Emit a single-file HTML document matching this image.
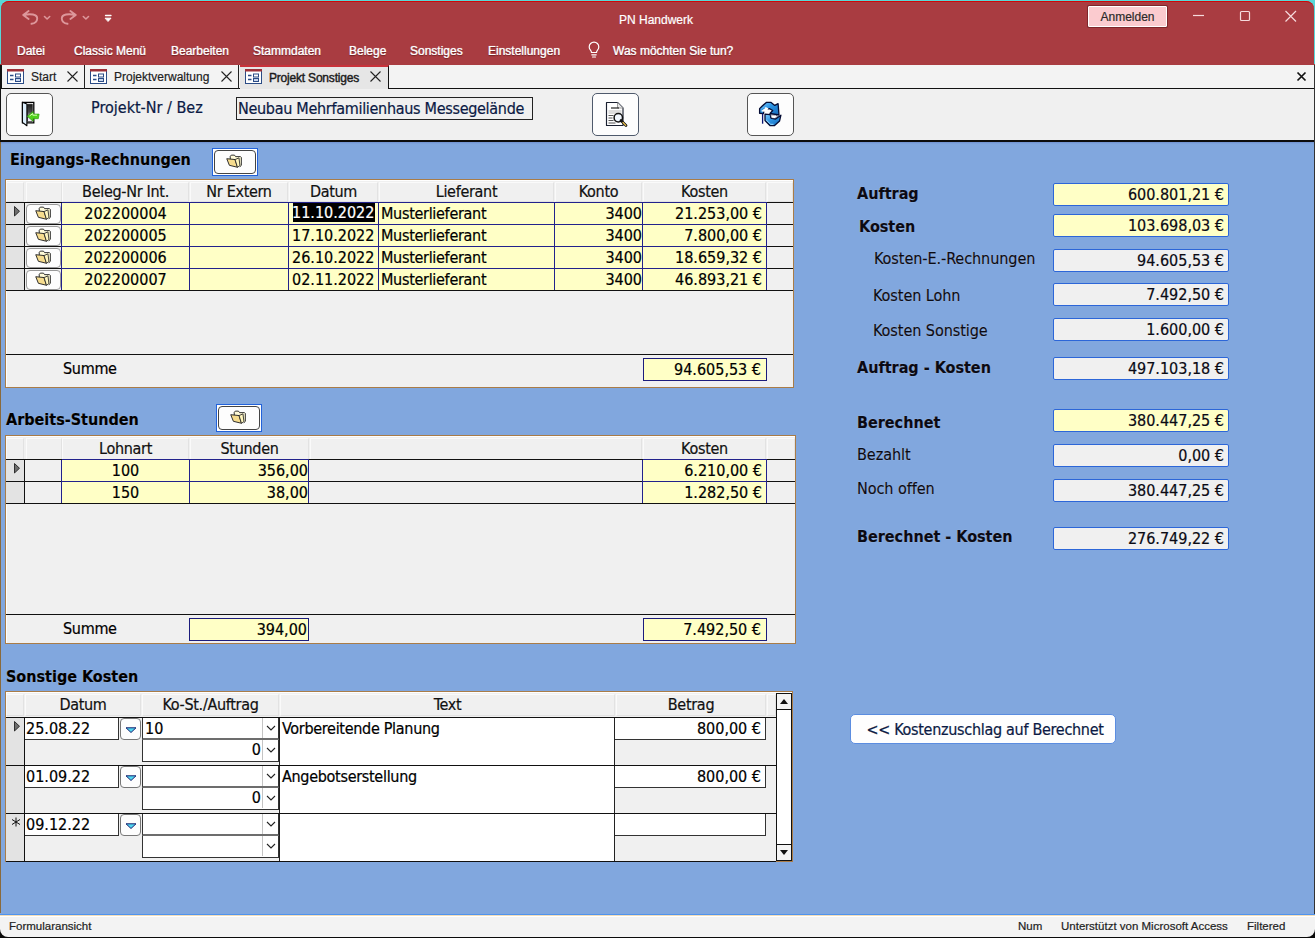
<!DOCTYPE html>
<html lang="de"><head><meta charset="utf-8"><title>PN Handwerk</title>
<style>
*{box-sizing:border-box;margin:0;padding:0}
html,body{width:1315px;height:938px;overflow:hidden}
body{position:relative;background:#81A7DE;font-family:'DejaVu Sans Condensed','Liberation Sans',sans-serif;font-size:16px;letter-spacing:-.3px;color:#000;line-height:1;-webkit-text-stroke:.2px currentColor}
.a{position:absolute;white-space:nowrap}
.ui{font-family:'Liberation Sans',sans-serif;letter-spacing:0}
.rib{left:0;top:0;width:1315px;height:65px;background:#A93C41}
.menu{top:44px;font-size:12px;color:#fff;height:14px;line-height:14px;text-shadow:0 0 1px rgba(255,255,255,.55),0 1px 1px rgba(70,0,0,.7)}
.tabrow{left:0;top:65px;width:1315px;height:24px;background:#F3F3F3;border-bottom:1px solid #111}
.tab{top:65px;height:24px;font-size:12px;line-height:25px;color:#222;border-right:1px solid #222}
.tab.act{background:#E6E6E6;border-right:1px solid #111;border-top:2px solid #C8323A;height:24px;line-height:20px;font-weight:normal;-webkit-text-stroke:.4px #1a1a1a;letter-spacing:-.2px;color:#1a1a1a}
.hdr{left:0;top:89px;width:1315px;height:51px;background:#F0F0F0}
.hline{left:0;top:140px;width:1315px;height:2px;background:#0c0c0c}
.btn{background:#FDFDFD;border:1px solid #555;border-radius:5px}
.fb{background:#fff;border:1px solid #2262DA}
.fb i{position:absolute;left:1px;top:1px;right:1px;bottom:1px;border:1px solid #444;border-radius:4px;background:#FDFDFD}
.h1{font-weight:bold;font-size:16px;letter-spacing:0;height:20px;line-height:20px;color:#000;text-shadow:0 0 1px rgba(255,255,255,.55)}
.sf{background:#F0F0F0;border:1px solid #A97C48;box-shadow:inset 1px 1px 0 #fff}
.hc{top:2px;height:20px;line-height:18px;text-align:center;border:1px solid #fafafa;border-right-color:#e2e2e2;border-bottom-color:#e2e2e2;color:#111}
.bl{background:#111}
.nl{background:#22228C}
.y{background:#FFFFC6}
.c{height:21px;line-height:19px}
.n{letter-spacing:0}
.r{text-align:right}
.ct{text-align:center}
.sel{background:#E3E3E3;border-right:1px solid #111}
.rb{background:#FDFDFD;border:1px solid #666;border-radius:4px}
.lab{height:20px;line-height:20px;letter-spacing:-.05px;color:#0a0a14;text-shadow:0 0 1px rgba(255,255,255,.6)}
.lab.b{font-weight:bold;font-size:16px;letter-spacing:0}
.fld{left:1053px;width:176px;height:23px;line-height:21px;letter-spacing:0;border:1px solid #2C66D8;border-radius:2px;text-align:right;padding-right:4px;background:#F0F0F0;color:#0a0a14}
.fld.y{background:#FFFFC6}
.sum{border:1px solid #1c1c7c;background:#FFFFC6;height:23px;line-height:21px;letter-spacing:0;text-align:right}
.wb{background:#fff;border:1px solid #333;border-top-color:#222;height:23px;line-height:21px}
.sb{left:0;top:914px;width:1315px;height:24px;background:#F3F3F3;border-top:1px solid #4F93EE;box-shadow:inset 0 1px 0 #F3DDB8,inset 0 2px 0 #fff}
.st{top:919px;font-size:11.5px;height:14px;line-height:14px;color:#222}
</style></head>
<body>
<div class="a rib" style=""></div>
<svg class="a" style="left:18px;top:8px" width="100" height="20" viewBox="0 0 100 20" fill="none" stroke="#DD979B" stroke-width="1.600" stroke-linecap="round" stroke-linejoin="round">
<path d="M10.600 3L5.200 7l5.400 4M6 7C12 5.500 19.500 6 19.200 10.800C19 14 16 15.500 13.500 15.800" stroke-width="1.900"/>
<path d="M26.500 8.500l2.600 2.500 2.600-2.500" stroke-width="1.600"/>
<path d="M52.400 3L57.800 7l-5.400 4M57 7C51 5.500 43.500 6 43.800 10.800C44 14 47 15.500 49.500 15.800" stroke-width="1.900"/>
<path d="M65.300 8.500l2.600 2.500 2.600-2.500" stroke-width="1.600"/>
<path d="M87.500 7.500h5.500" stroke="#fff" stroke-width="1.300"/><path d="M87.500 10.200h5.500l-2.750 3z" fill="#fff" stroke="#fff" stroke-width="1"/>
</svg>
<div class="a ui" style="left:556px;top:13px;width:200px;height:14px;line-height:14px;font-size:12px;color:#fff;text-align:center">PN Handwerk</div>
<div class="a ui" style="left:1088px;top:6px;width:79px;height:21px;background:#FBCBCF;border:1px solid #fff;box-shadow:0 0 0 1px rgba(90,20,24,.55);border-radius:1px;font-size:12px;line-height:20px;text-align:center;color:#2a2a2a">Anmelden</div>
<svg class="a" style="left:1185px;top:8px" width="120" height="18" viewBox="0 0 120 18" fill="none" stroke="#F6DADC" stroke-width="1.200">
<path d="M8 7.500h11"/><rect x="55.500" y="3.500" width="9" height="9" rx="1"/><path d="M100.500 3l10.500 10.500M111 3l-10.500 10.500"/></svg>
<div class="a menu ui" style="left:17px">Datei</div>
<div class="a menu ui" style="left:74px">Classic Menü</div>
<div class="a menu ui" style="left:171px">Bearbeiten</div>
<div class="a menu ui" style="left:253px">Stammdaten</div>
<div class="a menu ui" style="left:349px">Belege</div>
<div class="a menu ui" style="left:410px">Sonstiges</div>
<div class="a menu ui" style="left:488px">Einstellungen</div>
<div class="a menu ui" style="left:613px">Was möchten Sie tun?</div>
<svg class="a" style="left:586px;top:40px" width="16" height="19" viewBox="0 0 16 19" fill="none" stroke="#fff" stroke-width="1.200" stroke-linecap="round"><path d="M5.500 12.500c0-2-2.300-2.800-2.300-5.600a4.800 4.800 0 0 1 9.600 0c0 2.800-2.300 3.600-2.300 5.600z"/><path d="M5.800 14.800h4.400M6.500 17h3"/></svg>
<div class="a tabrow" style=""></div>
<div class="a tab ui" style="left:3px;width:82px"><svg class="a" style="left:4px;top:4px" width="17" height="15" viewBox="0 0 17 15"><rect x=".5" y=".5" width="16" height="14" fill="#fff" stroke="#2B4C86"/><rect x="0" y="0" width="17" height="2.500" fill="#9C3038"/><path d="M3 6.500h3.500M3 10.500h3.500" stroke="#2B4C86" stroke-width="1.400"/><rect x="8.500" y="5" width="5" height="3" fill="none" stroke="#2B4C86"/><rect x="8.500" y="9.500" width="5" height="3" fill="#C9D6EC" stroke="#2B4C86"/></svg><span class="a" style="left:28px">Start</span><svg class="a" style="left:64px;top:6px" width="11" height="11" viewBox="0 0 11 11" stroke="#222" stroke-width="1.100"><path d="M.5.500l10 10M10.500.500l-10 10"/></svg></div>
<div class="a tab ui" style="left:85px;width:154px"><svg class="a" style="left:5px;top:4px" width="17" height="15" viewBox="0 0 17 15"><rect x=".5" y=".5" width="16" height="14" fill="#fff" stroke="#2B4C86"/><rect x="0" y="0" width="17" height="2.500" fill="#9C3038"/><path d="M3 6.500h3.500M3 10.500h3.500" stroke="#2B4C86" stroke-width="1.400"/><rect x="8.500" y="5" width="5" height="3" fill="none" stroke="#2B4C86"/><rect x="8.500" y="9.500" width="5" height="3" fill="#C9D6EC" stroke="#2B4C86"/></svg><span class="a" style="left:29px">Projektverwaltung</span><svg class="a" style="left:136px;top:6px" width="11" height="11" viewBox="0 0 11 11" stroke="#222" stroke-width="1.100"><path d="M.5.500l10 10M10.500.500l-10 10"/></svg></div>
<div class="a tab ui act" style="left:240px;width:149px"><svg class="a" style="left:5px;top:2px" width="17" height="15" viewBox="0 0 17 15"><rect x=".5" y=".5" width="16" height="14" fill="#fff" stroke="#2B4C86"/><rect x="0" y="0" width="17" height="2.500" fill="#9C3038"/><path d="M3 6.500h3.500M3 10.500h3.500" stroke="#2B4C86" stroke-width="1.400"/><rect x="8.500" y="5" width="5" height="3" fill="none" stroke="#2B4C86"/><rect x="8.500" y="9.500" width="5" height="3" fill="#C9D6EC" stroke="#2B4C86"/></svg><span class="a" style="left:29px;top:1px">Projekt Sonstiges</span><svg class="a" style="left:130px;top:4px" width="11" height="11" viewBox="0 0 11 11" stroke="#222" stroke-width="1.100"><path d="M.5.500l10 10M10.500.500l-10 10"/></svg></div>
<svg class="a" style="left:1296px;top:71px" width="11" height="11" viewBox="0 0 11 11" stroke="#111" stroke-width="1.700"><path d="M1.500 1.500l8 8M9.500 1.500l-8 8"/></svg>
<div class="a hdr" style=""></div>
<div class="a hline" style=""></div>
<div class="a " style="left:0;top:142px;width:1315px;height:2px;background:linear-gradient(#6F90D0,#81A7DE)"></div>
<div class="a " style="left:0;top:65px;width:2px;height:24px;background:#111"></div>
<div class="a " style="left:0;top:89px;width:1px;height:52px;background:#111"></div>
<div class="a " style="left:0;top:142px;width:1px;height:771px;background:#8a6a3c"></div>
<div class="a " style="left:1314px;top:65px;width:1px;height:873px;background:#333"></div>
<div class="a btn" style="left:6px;top:93px;width:47px;height:43px"></div>
<div class="a btn" style="left:592px;top:93px;width:47px;height:43px;border-color:#4f5a6c"></div>
<div class="a btn" style="left:747px;top:93px;width:47px;height:43px"></div>
<svg class="a" style="left:20px;top:101px" width="22" height="26" viewBox="0 0 22 26">
<defs><linearGradient id="dg" x1="0" y1="0" x2="0" y2="1"><stop offset="0" stop-color="#1e1e1e"/><stop offset=".45" stop-color="#4a4a4a"/><stop offset=".8" stop-color="#e6d8f0"/><stop offset="1" stop-color="#fff"/></linearGradient></defs>
<path d="M2.500 1.300h11.300v20.600H2.500z" fill="#fff" stroke="#000" stroke-width="1.300"/><path d="M7.500 3.300h4.800v17.300H7.500z" fill="url(#dg)" stroke="#111" stroke-width=".7"/>
<path d="M2.400 1.300L6.900 3v21.800L2.400 21.400z" fill="#DCEEFB" stroke="#000" stroke-width="1.100" stroke-linejoin="round"/>
<path d="M7.200 15.300l6-4.800v2.600h5.900l-.8 4.600h-5.100v2.500z" fill="#4FD11B" stroke="#34A014" stroke-width=".7" stroke-linejoin="round"/>
<path d="M9.500 15l3.300-2.500v1.700h4.200" stroke="#D4FFB0" stroke-width="1" fill="none"/>
</svg>
<svg class="a" style="left:605px;top:101px" width="24" height="26" viewBox="0 0 24 26">
<path d="M1.500 1.500h11l5.500 5.500v17.500h-16.500z" fill="#fff" stroke="#1a2030" stroke-width="1.150" stroke-linejoin="round"/>
<path d="M12.500 1.500v5.500h5.500" fill="#e8e8e8" stroke="#888" stroke-width=".8"/>
<path d="M6 7h8" stroke="#222" stroke-width="1.200"/><path d="M3.500 10h13M3.500 12h13" stroke="#bbb" stroke-width="1"/>
<path d="M3.500 14.500h5M3.500 17h4M3.500 19.500h5M3.500 22h7" stroke="#555" stroke-width="1.100"/>
<circle cx="13.300" cy="16.800" r="4.200" fill="#F2F8FF" stroke="#111" stroke-width="1.500"/>
<path d="M16 19.500l5 5" stroke="#111" stroke-width="2.600" stroke-linecap="round"/><path d="M18 21.500l2.800 2.800" stroke="#F3C64B" stroke-width="1.200" stroke-linecap="round"/>
</svg>
<svg class="a" style="left:758px;top:101px" width="24" height="26" viewBox="0 0 24 26">
<defs><linearGradient id="rg" x1="0" y1="0" x2="1" y2="1"><stop offset="0" stop-color="#7CCBFF"/><stop offset=".45" stop-color="#2C93E2"/><stop offset="1" stop-color="#1568B8"/></linearGradient></defs>
<path d="M1.600 12.300V7.600L4 5.200 8.300 1.400h4.800l3.700 3 3.300-1.700.9 11.300-9-1.500 2.700-3-3-1.800-3.700.2-2 1.300-.5 3.300z" fill="url(#rg)" stroke="#040c34" stroke-width="1.300" stroke-linejoin="round"/>
<path d="M3.600 10.500c0-2.500 1.400-4.300 3.600-4.300 1.500 0 2.300.6 3.300 1.300L8.700 9.800l-2.300.9z" fill="#fff"/>
<path d="M4.200 9c.6-1.500 1.600-2.300 2.900-2.200" stroke="#2C93E2" stroke-width="1.200" fill="none"/>
<path d="M4.600 12.500v10.200" stroke="#0a1470" stroke-width="1.300"/>
<path d="M7 13.200l5.300.5 .6 3.300 4.700 1 5.300-3.800-1.300 5.700-5.300 4.800h-4.100L7 19.500z" fill="url(#rg)" stroke="#040c34" stroke-width="1.300" stroke-linejoin="round"/>
<path d="M12.600 13.800l5.300.2 1.600 1.400-2.600 2.200-3.600-.5z" fill="#fff" stroke="#040c34" stroke-width=".6"/>
<path d="M8.200 19l4.500 4.300h2.800" stroke="#9CDCFF" stroke-width="1" fill="none"/>
</svg>
<div class="a " style="left:91px;top:98px;height:20px;line-height:20px;font-size:16px;letter-spacing:0;color:#0b1a44">Projekt-Nr / Bez</div>
<div class="a " style="left:236px;top:97px;width:297px;height:23px;border:1px solid #222;line-height:22px;padding-left:1px;color:#0b1a44;background:#F0F0F0">Neubau Mehrfamilienhaus Messegelände</div>
<div class="a h1" style="left:10px;top:150px">Eingangs-Rechnungen</div>
<div class="a fb" style="left:212px;top:148px;width:46px;height:28px"><i></i><svg class="a" style="left:13px;top:5px" width="16" height="14.500" viewBox="0 0 17 15"><path d="M4.500 5.500V2.200L5.600 1h3.400l1.200 1.600h5.200l.9.900v8.400l-1.600 1.500" fill="#FFFBD8" stroke="#222" stroke-width="1" stroke-linejoin="round"/><path d="M.8 4.800l8.800.9 2.600 8.200-8.600-2.100z" fill="#F6DC8E" stroke="#222" stroke-width="1" stroke-linejoin="round"/><path d="M9.600 5.700l4.200-1.800 1 8.200-2.600 1.800z" fill="#FFF6BE" stroke="#222" stroke-width=".9" stroke-linejoin="round"/></svg></div>
<div class="a sf" style="left:5px;top:179px;width:789px;height:209px"><div class="a hc" style="left:0px;width:18px;height:20px;line-height:18px"></div><div class="a hc" style="left:20px;width:36px;height:20px;line-height:18px"></div><div class="a hc" style="left:56px;width:127px;height:20px;line-height:18px">Beleg-Nr Int.</div><div class="a hc" style="left:184px;width:98px;height:20px;line-height:18px">Nr Extern</div><div class="a hc" style="left:283px;width:89px;height:20px;line-height:18px">Datum</div><div class="a hc" style="left:373px;width:175px;height:20px;line-height:18px">Lieferant</div><div class="a hc" style="left:549px;width:87px;height:20px;line-height:18px">Konto</div><div class="a hc" style="left:637px;width:123px;height:20px;line-height:18px">Kosten</div><div class="a hc" style="left:761px;width:26px;height:20px;line-height:18px"></div><div class="a sel" style="left:0;top:22px;width:19px;height:88px"></div><div class="a y" style="left:56px;top:22px;width:705px;height:88px"></div><div class="a rb" style="left:20px;top:24px;width:35px;height:20px;border-color:#999"><svg class="a" style="left:8px;top:1px" width="16" height="14.500" viewBox="0 0 17 15"><path d="M4.500 5.500V2.200L5.600 1h3.400l1.200 1.600h5.200l.9.900v8.400l-1.600 1.500" fill="#FFFBD8" stroke="#222" stroke-width="1" stroke-linejoin="round"/><path d="M.8 4.800l8.800.9 2.600 8.200-8.600-2.100z" fill="#F6DC8E" stroke="#222" stroke-width="1" stroke-linejoin="round"/><path d="M9.600 5.700l4.200-1.800 1 8.200-2.600 1.800z" fill="#FFF6BE" stroke="#222" stroke-width=".9" stroke-linejoin="round"/></svg></div><div class="a c ct n" style="left:56px;top:24px;width:127px">202200004</div><div class="a c" style="left:287px;top:23px;width:82px;height:19px;line-height:19px;letter-spacing:0;background:#000;color:#fff;text-indent:-1px">11.10.2022</div><div class="a c " style="left:375px;top:24px;width:170px">Musterlieferant</div><div class="a c r n" style="left:549px;top:24px;width:87px">3400</div><div class="a c r n" style="left:637px;top:24px;width:119px">21.253,00 €</div><div class="a rb" style="left:20px;top:46px;width:35px;height:20px;border-color:#999"><svg class="a" style="left:8px;top:1px" width="16" height="14.500" viewBox="0 0 17 15"><path d="M4.500 5.500V2.200L5.600 1h3.400l1.200 1.600h5.200l.9.900v8.400l-1.600 1.500" fill="#FFFBD8" stroke="#222" stroke-width="1" stroke-linejoin="round"/><path d="M.8 4.800l8.800.9 2.600 8.200-8.600-2.100z" fill="#F6DC8E" stroke="#222" stroke-width="1" stroke-linejoin="round"/><path d="M9.600 5.700l4.200-1.800 1 8.200-2.600 1.800z" fill="#FFF6BE" stroke="#222" stroke-width=".9" stroke-linejoin="round"/></svg></div><div class="a c ct n" style="left:56px;top:46px;width:127px">202200005</div><div class="a c n" style="left:286px;top:46px;width:88px">17.10.2022</div><div class="a c " style="left:375px;top:46px;width:170px">Musterlieferant</div><div class="a c r n" style="left:549px;top:46px;width:87px">3400</div><div class="a c r n" style="left:637px;top:46px;width:119px">7.800,00 €</div><div class="a rb" style="left:20px;top:68px;width:35px;height:20px;border-color:#999"><svg class="a" style="left:8px;top:1px" width="16" height="14.500" viewBox="0 0 17 15"><path d="M4.500 5.500V2.200L5.600 1h3.400l1.200 1.600h5.200l.9.900v8.400l-1.600 1.500" fill="#FFFBD8" stroke="#222" stroke-width="1" stroke-linejoin="round"/><path d="M.8 4.800l8.800.9 2.600 8.200-8.600-2.100z" fill="#F6DC8E" stroke="#222" stroke-width="1" stroke-linejoin="round"/><path d="M9.600 5.700l4.200-1.800 1 8.200-2.600 1.800z" fill="#FFF6BE" stroke="#222" stroke-width=".9" stroke-linejoin="round"/></svg></div><div class="a c ct n" style="left:56px;top:68px;width:127px">202200006</div><div class="a c n" style="left:286px;top:68px;width:88px">26.10.2022</div><div class="a c " style="left:375px;top:68px;width:170px">Musterlieferant</div><div class="a c r n" style="left:549px;top:68px;width:87px">3400</div><div class="a c r n" style="left:637px;top:68px;width:119px">18.659,32 €</div><div class="a rb" style="left:20px;top:90px;width:35px;height:20px;border-color:#999"><svg class="a" style="left:8px;top:1px" width="16" height="14.500" viewBox="0 0 17 15"><path d="M4.500 5.500V2.200L5.600 1h3.400l1.200 1.600h5.200l.9.900v8.400l-1.600 1.500" fill="#FFFBD8" stroke="#222" stroke-width="1" stroke-linejoin="round"/><path d="M.8 4.800l8.800.9 2.600 8.200-8.600-2.100z" fill="#F6DC8E" stroke="#222" stroke-width="1" stroke-linejoin="round"/><path d="M9.600 5.700l4.200-1.800 1 8.200-2.600 1.800z" fill="#FFF6BE" stroke="#222" stroke-width=".9" stroke-linejoin="round"/></svg></div><div class="a c ct n" style="left:56px;top:90px;width:127px">202200007</div><div class="a c n" style="left:286px;top:90px;width:88px">02.11.2022</div><div class="a c " style="left:375px;top:90px;width:170px">Musterlieferant</div><div class="a c r n" style="left:549px;top:90px;width:87px">3400</div><div class="a c r n" style="left:637px;top:90px;width:119px">46.893,21 €</div><div class="a bl" style="left:0px;top:22px;width:787px;height:1px"></div><div class="a nl" style="left:56px;top:22px;width:705px;height:1px"></div><div class="a bl" style="left:0px;top:44px;width:787px;height:1px"></div><div class="a nl" style="left:56px;top:44px;width:705px;height:1px"></div><div class="a bl" style="left:0px;top:66px;width:787px;height:1px"></div><div class="a nl" style="left:56px;top:66px;width:705px;height:1px"></div><div class="a bl" style="left:0px;top:88px;width:787px;height:1px"></div><div class="a nl" style="left:56px;top:88px;width:705px;height:1px"></div><div class="a bl" style="left:0px;top:110px;width:787px;height:1px"></div><div class="a nl" style="left:183px;top:22px;width:1px;height:88px"></div><div class="a nl" style="left:282px;top:22px;width:1px;height:88px"></div><div class="a nl" style="left:372px;top:22px;width:1px;height:88px"></div><div class="a nl" style="left:548px;top:22px;width:1px;height:88px"></div><div class="a nl" style="left:636px;top:22px;width:1px;height:88px"></div><div class="a nl" style="left:760px;top:22px;width:1px;height:88px"></div><div class="a nl" style="left:55px;top:23px;width:1px;height:87px"></div><svg class="a" style="left:7px;top:25px" width="8" height="13" viewBox="0 0 8 13"><path d="M1.500 1.500v9.500l5-4.750z" fill="#6e6e6e" stroke="#111" stroke-width=".8" stroke-linejoin="round"/></svg><div class="a bl" style="left:0px;top:174px;width:787px;height:1px"></div><div class="a" style="left:57px;top:179px;height:20px;line-height:20px">Summe</div><div class="a sum" style="left:637px;top:178px;width:124px;padding-right:5px">94.605,53 €</div></div>
<div class="a h1" style="left:6px;top:410px">Arbeits-Stunden</div>
<div class="a fb" style="left:216px;top:404px;width:46px;height:28px"><i></i><svg class="a" style="left:13px;top:5px" width="16" height="14.500" viewBox="0 0 17 15"><path d="M4.500 5.500V2.200L5.600 1h3.400l1.200 1.600h5.200l.9.900v8.400l-1.600 1.500" fill="#FFFBD8" stroke="#222" stroke-width="1" stroke-linejoin="round"/><path d="M.8 4.800l8.800.9 2.600 8.200-8.600-2.100z" fill="#F6DC8E" stroke="#222" stroke-width="1" stroke-linejoin="round"/><path d="M9.600 5.700l4.200-1.800 1 8.200-2.600 1.800z" fill="#FFF6BE" stroke="#222" stroke-width=".9" stroke-linejoin="round"/></svg></div>
<div class="a sf" style="left:5px;top:435px;width:791px;height:209px"><div class="a hc" style="left:0px;width:18px;height:22px;line-height:20px"></div><div class="a hc" style="left:20px;width:36px;height:22px;line-height:20px"></div><div class="a hc" style="left:56px;width:127px;height:22px;line-height:20px">Lohnart</div><div class="a hc" style="left:184px;width:119px;height:22px;line-height:20px">Stunden</div><div class="a hc" style="left:304px;width:332px;height:22px;line-height:20px"></div><div class="a hc" style="left:637px;width:123px;height:22px;line-height:20px">Kosten</div><div class="a hc" style="left:761px;width:28px;height:22px;line-height:20px"></div><div class="a sel" style="left:0;top:23px;width:19px;height:44px"></div><div class="a y" style="left:56px;top:23px;width:247px;height:44px"></div><div class="a y" style="left:637px;top:23px;width:124px;height:44px"></div><div class="a c ct n" style="left:56px;top:25px;width:127px">100</div><div class="a c r n" style="left:184px;top:25px;width:118px">356,00</div><div class="a c r n" style="left:637px;top:25px;width:119px">6.210,00 €</div><div class="a c ct n" style="left:56px;top:47px;width:127px">150</div><div class="a c r n" style="left:184px;top:47px;width:118px">38,00</div><div class="a c r n" style="left:637px;top:47px;width:119px">1.282,50 €</div><div class="a bl" style="left:0px;top:23px;width:789px;height:1px"></div><div class="a nl" style="left:56px;top:23px;width:247px;height:1px"></div><div class="a nl" style="left:637px;top:23px;width:124px;height:1px"></div><div class="a bl" style="left:0px;top:45px;width:789px;height:1px"></div><div class="a nl" style="left:56px;top:45px;width:247px;height:1px"></div><div class="a nl" style="left:637px;top:45px;width:124px;height:1px"></div><div class="a bl" style="left:0px;top:67px;width:789px;height:1px"></div><div class="a nl" style="left:55px;top:24px;width:1px;height:43px"></div><div class="a nl" style="left:183px;top:24px;width:1px;height:43px"></div><div class="a nl" style="left:302px;top:24px;width:1px;height:43px"></div><div class="a nl" style="left:636px;top:24px;width:1px;height:43px"></div><div class="a nl" style="left:760px;top:24px;width:1px;height:43px"></div><svg class="a" style="left:7px;top:26px" width="8" height="13" viewBox="0 0 8 13"><path d="M1.500 1.500v9.500l5-4.750z" fill="#6e6e6e" stroke="#111" stroke-width=".8" stroke-linejoin="round"/></svg><div class="a bl" style="left:0px;top:178px;width:789px;height:1px"></div><div class="a" style="left:57px;top:183px;height:20px;line-height:20px">Summe</div><div class="a sum" style="left:183px;top:182px;width:120px;padding-right:1px">394,00</div><div class="a sum" style="left:637px;top:182px;width:124px;padding-right:5px">7.492,50 €</div></div>
<div class="a h1" style="left:6px;top:667px">Sonstige Kosten</div>
<div class="a sf" style="left:5px;top:691px;width:788px;height:171px"><div class="a hc" style="left:0px;width:18px;height:22px;line-height:20px"></div><div class="a hc" style="left:19px;width:116px;height:22px;line-height:20px">Datum</div><div class="a hc" style="left:136px;width:137px;height:22px;line-height:20px">Ko-St./Auftrag</div><div class="a hc" style="left:274px;width:335px;height:22px;line-height:20px">Text</div><div class="a hc" style="left:610px;width:150px;height:22px;line-height:20px">Betrag</div><div class="a hc" style="left:761px;width:9px;height:22px;line-height:20px"></div><div class="a sel" style="left:0;top:25px;width:19px;height:144px"></div><div class="a" style="left:19px;top:26px;width:94px;height:22px;background:#fff;border-right:1px solid #333;border-bottom:1px solid #333;padding-left:1px;line-height:21px;letter-spacing:0">25.08.22</div><div class="a rb" style="left:114px;top:26px;width:21px;height:22px;border-color:#777"><svg class="a" style="left:4px;top:8px" width="12" height="7" viewBox="0 0 12 7"><path d="M1 .800h10L6 5.500z" fill="#4FD6F0" stroke="#162070" stroke-width="1" stroke-linejoin="round"/></svg></div><div class="a" style="left:136px;top:26px;width:137px;height:22px;background:#fff;border-left:1px solid #333;border-right:1px solid #333;border-bottom:2px solid #6d6d6d;padding-left:2px;line-height:21px;letter-spacing:0">10<svg class="a" style="right:2px;top:7px" width="10" height="7" viewBox="0 0 10 7" fill="none" stroke="#222" stroke-width="1.100"><path d="M1 1l4 4 4-4"/></svg><div class="a" style="right:15px;top:0px;width:1px;height:20px;background:#c4c4c4"></div></div><div class="a" style="left:136px;top:48px;width:137px;height:22px;background:#fff;border:1px solid #333;border-top:none;text-align:right;padding-right:17px;line-height:19px;letter-spacing:0">0<svg class="a" style="right:2px;top:7px" width="10" height="7" viewBox="0 0 10 7" fill="none" stroke="#222" stroke-width="1.100"><path d="M1 1l4 4 4-4"/></svg><div class="a" style="right:15px;top:0px;width:1px;height:20px;background:#c4c4c4"></div></div><div class="a" style="left:273px;top:26px;width:336px;height:47px;background:#fff;border-left:1px solid #222;border-right:1px solid #222;padding-left:2px;line-height:21px">Vorbereitende Planung</div><div class="a" style="left:609px;top:26px;width:151px;height:22px;background:#fff;border-right:1px solid #333;border-bottom:1px solid #333;text-align:right;padding-right:4px;line-height:21px;letter-spacing:0">800,00 €</div><div class="a bl" style="left:0px;top:25px;width:770px;height:1px"></div><div class="a" style="left:19px;top:74px;width:94px;height:22px;background:#fff;border-right:1px solid #333;border-bottom:1px solid #333;padding-left:1px;line-height:21px;letter-spacing:0">01.09.22</div><div class="a rb" style="left:114px;top:74px;width:21px;height:22px;border-color:#777"><svg class="a" style="left:4px;top:8px" width="12" height="7" viewBox="0 0 12 7"><path d="M1 .800h10L6 5.500z" fill="#4FD6F0" stroke="#162070" stroke-width="1" stroke-linejoin="round"/></svg></div><div class="a" style="left:136px;top:74px;width:137px;height:22px;background:#fff;border-left:1px solid #333;border-right:1px solid #333;border-bottom:2px solid #6d6d6d;padding-left:2px;line-height:21px;letter-spacing:0"><svg class="a" style="right:2px;top:7px" width="10" height="7" viewBox="0 0 10 7" fill="none" stroke="#222" stroke-width="1.100"><path d="M1 1l4 4 4-4"/></svg><div class="a" style="right:15px;top:0px;width:1px;height:20px;background:#c4c4c4"></div></div><div class="a" style="left:136px;top:96px;width:137px;height:22px;background:#fff;border:1px solid #333;border-top:none;text-align:right;padding-right:17px;line-height:19px;letter-spacing:0">0<svg class="a" style="right:2px;top:7px" width="10" height="7" viewBox="0 0 10 7" fill="none" stroke="#222" stroke-width="1.100"><path d="M1 1l4 4 4-4"/></svg><div class="a" style="right:15px;top:0px;width:1px;height:20px;background:#c4c4c4"></div></div><div class="a" style="left:273px;top:74px;width:336px;height:47px;background:#fff;border-left:1px solid #222;border-right:1px solid #222;padding-left:2px;line-height:21px">Angebotserstellung</div><div class="a" style="left:609px;top:74px;width:151px;height:22px;background:#fff;border-right:1px solid #333;border-bottom:1px solid #333;text-align:right;padding-right:4px;line-height:21px;letter-spacing:0">800,00 €</div><div class="a bl" style="left:0px;top:73px;width:770px;height:1px"></div><div class="a" style="left:19px;top:122px;width:94px;height:22px;background:#fff;border-right:1px solid #333;border-bottom:1px solid #333;padding-left:1px;line-height:21px;letter-spacing:0">09.12.22</div><div class="a rb" style="left:114px;top:122px;width:21px;height:22px;border-color:#777"><svg class="a" style="left:4px;top:8px" width="12" height="7" viewBox="0 0 12 7"><path d="M1 .800h10L6 5.500z" fill="#4FD6F0" stroke="#162070" stroke-width="1" stroke-linejoin="round"/></svg></div><div class="a" style="left:136px;top:122px;width:137px;height:22px;background:#fff;border-left:1px solid #333;border-right:1px solid #333;border-bottom:2px solid #6d6d6d;padding-left:2px;line-height:21px;letter-spacing:0"><svg class="a" style="right:2px;top:7px" width="10" height="7" viewBox="0 0 10 7" fill="none" stroke="#222" stroke-width="1.100"><path d="M1 1l4 4 4-4"/></svg><div class="a" style="right:15px;top:0px;width:1px;height:20px;background:#c4c4c4"></div></div><div class="a" style="left:136px;top:144px;width:137px;height:22px;background:#fff;border:1px solid #333;border-top:none;text-align:right;padding-right:17px;line-height:19px;letter-spacing:0"><svg class="a" style="right:2px;top:7px" width="10" height="7" viewBox="0 0 10 7" fill="none" stroke="#222" stroke-width="1.100"><path d="M1 1l4 4 4-4"/></svg><div class="a" style="right:15px;top:0px;width:1px;height:20px;background:#c4c4c4"></div></div><div class="a" style="left:273px;top:122px;width:336px;height:47px;background:#fff;border-left:1px solid #222;border-right:1px solid #222;padding-left:2px;line-height:21px"></div><div class="a" style="left:609px;top:122px;width:151px;height:22px;background:#fff;border-right:1px solid #333;border-bottom:1px solid #333;text-align:right;padding-right:4px;line-height:21px;letter-spacing:0"></div><div class="a bl" style="left:0px;top:121px;width:770px;height:1px"></div><div class="a bl" style="left:0px;top:169px;width:770px;height:1px"></div><svg class="a" style="left:7px;top:28px" width="8" height="13" viewBox="0 0 8 13"><path d="M1.500 1.500v9.500l5-4.750z" fill="#6e6e6e" stroke="#111" stroke-width=".8" stroke-linejoin="round"/></svg><svg class="a" style="left:5px;top:125px" width="10" height="10" viewBox="0 0 10 10" stroke="#111" stroke-width="1"><path d="M5 .500v9M1 2.500l8 5M9 2.500l-8 5"/></svg><div class="a bl" style="left:18px;top:25px;width:1px;height:144px"></div><div class="a" style="left:770px;top:1px;width:16px;height:168px;background:#fff;border:1px solid #111"></div><div class="a" style="left:770px;top:1px;width:16px;height:17px;background:#F4F4F4;border:1px solid #111"><svg class="a" style="left:3px;top:5px" width="8" height="5" viewBox="0 0 8 5"><path d="M0 5h8L4 0z" fill="#111"/></svg></div><div class="a" style="left:770px;top:152px;width:16px;height:17px;background:#F4F4F4;border:1px solid #111"><svg class="a" style="left:3px;top:5px" width="8" height="5" viewBox="0 0 8 5"><path d="M0 0h8L4 5z" fill="#111"/></svg></div></div>
<div class="a lab b" style="left:857px;top:184px">Auftrag</div>
<div class="a lab b" style="left:859px;top:217px">Kosten</div>
<div class="a lab" style="left:874px;top:249px">Kosten-E.-Rechnungen</div>
<div class="a lab" style="left:873px;top:286px">Kosten Lohn</div>
<div class="a lab" style="left:873px;top:321px">Kosten Sonstige</div>
<div class="a lab b" style="left:857px;top:358px">Auftrag - Kosten</div>
<div class="a lab b" style="left:857px;top:413px">Berechnet</div>
<div class="a lab" style="left:857px;top:445px">Bezahlt</div>
<div class="a lab" style="left:857px;top:479px">Noch offen</div>
<div class="a lab b" style="left:857px;top:527px">Berechnet - Kosten</div>
<div class="a fld y" style="top:183px">600.801,21 €</div>
<div class="a fld y" style="top:214px">103.698,03 €</div>
<div class="a fld" style="top:249px">94.605,53 €</div>
<div class="a fld" style="top:283px">7.492,50 €</div>
<div class="a fld" style="top:318px">1.600,00 €</div>
<div class="a fld" style="top:357px">497.103,18 €</div>
<div class="a fld y" style="top:409px">380.447,25 €</div>
<div class="a fld" style="top:444px">0,00 €</div>
<div class="a fld" style="top:479px">380.447,25 €</div>
<div class="a fld" style="top:527px">276.749,22 €</div>
<div class="a " style="left:850px;top:714px;width:266px;height:30px;background:#FEFEFE;border:1px solid #5B8DE0;border-radius:5px;text-align:center;line-height:30px;color:#0b1a44;padding-left:4px">&lt;&lt; Kostenzuschlag auf Berechnet</div>
<div class="a sb" style=""></div>
<div class="a st ui" style="left:9px">Formularansicht</div>
<div class="a st ui" style="left:1018px">Num</div>
<div class="a st ui" style="left:1061px">Unterstützt von Microsoft Access</div>
<div class="a st ui" style="left:1247px">Filtered</div>
<div class="a " style="left:1px;top:1px;width:1313px;height:63px;border-radius:8px 8px 0 0;border-top:1px solid #D00808;box-shadow:0 -8px 0 8px #58D8D8;pointer-events:none"></div>
<div class="a " style="left:0;top:880px;width:1315px;height:57px;border-radius:0 0 8px 8px;box-shadow:0 8px 0 8px #0a0a0a;pointer-events:none"></div>
</body></html>
